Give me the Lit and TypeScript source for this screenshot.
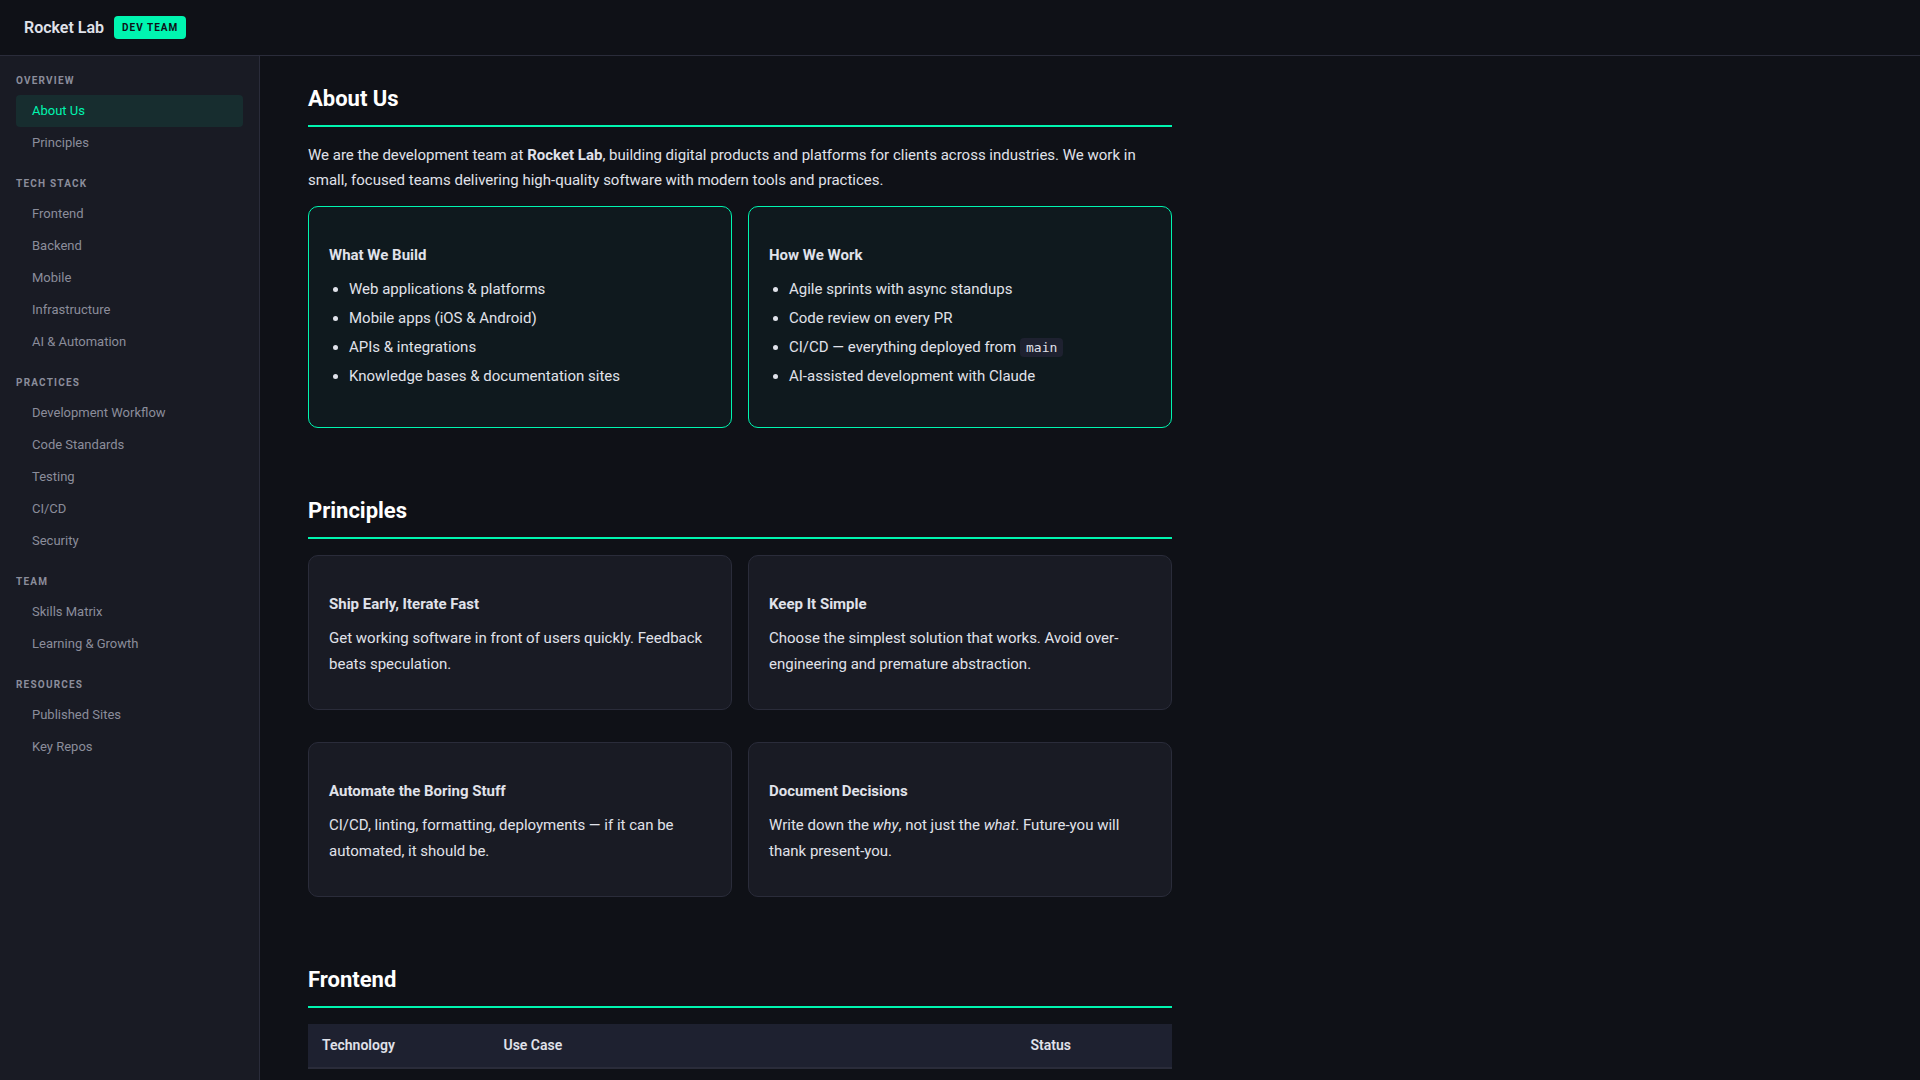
import { LitElement, html, css, type TemplateResult } from "lit";
import { customElement, state } from "lit/decorators.js";

interface NavGroup {
  title: string;
  items: string[];
}

interface Card {
  title: string;
  body: TemplateResult;
}

const NAV: NavGroup[] = [
  { title: "Overview", items: ["About Us", "Principles"] },
  {
    title: "Tech Stack",
    items: ["Frontend", "Backend", "Mobile", "Infrastructure", "AI & Automation"],
  },
  {
    title: "Practices",
    items: ["Development Workflow", "Code Standards", "Testing", "CI/CD", "Security"],
  },
  { title: "Team", items: ["Skills Matrix", "Learning & Growth"] },
  { title: "Resources", items: ["Published Sites", "Key Repos"] },
];

const ABOUT: Card[] = [
  {
    title: "What We Build",
    body: html`<ul class="list">
      <li>Web applications &amp; platforms</li>
      <li>Mobile apps (iOS &amp; Android)</li>
      <li>APIs &amp; integrations</li>
      <li>Knowledge bases &amp; documentation sites</li>
    </ul>`,
  },
  {
    title: "How We Work",
    body: html`<ul class="list">
      <li>Agile sprints with async standups</li>
      <li>Code review on every PR</li>
      <li>CI/CD — everything deployed from <code class="code">main</code></li>
      <li>AI-assisted development with Claude</li>
    </ul>`,
  },
];

const PRINCIPLES: Card[] = [
  {
    title: "Ship Early, Iterate Fast",
    body: html`<p class="text">
      Get working software in front of users quickly. Feedback beats speculation.
    </p>`,
  },
  {
    title: "Keep It Simple",
    body: html`<p class="text">
      Choose the simplest solution that works. Avoid over-engineering and premature abstraction.
    </p>`,
  },
  {
    title: "Automate the Boring Stuff",
    body: html`<p class="text">
      CI/CD, linting, formatting, deployments — if it can be automated, it should be.
    </p>`,
  },
  {
    title: "Document Decisions",
    body: html`<p class="text">
      Write down the <em>why</em>, not just the <em>what</em>. Future-you will thank present-you.
    </p>`,
  },
];

const slug = (name: string) => name.toLowerCase().replace(/[^a-z]+/g, "-");

@customElement("app-root")
export class AppRoot extends LitElement {
  static styles = css`
    :host {
      --bg: #0f1117;
      --surface: #191b24;
      --raised: #1e2130;
      --line: #2a2c3a;
      --text: #e0e2ea;
      --muted: #8b8d9b;
      --accent: #00f5b0;
      display: flex;
      flex-direction: column;
      min-height: 100vh;
      background: var(--bg);
      color: var(--text);
      font: 15px/25px Roboto, sans-serif;
    }
    * {
      box-sizing: border-box;
    }
    .topbar {
      display: flex;
      align-items: center;
      gap: 10px;
      padding: 16px 24px;
      border-bottom: 1px solid var(--line);
    }
    .brand {
      font-size: 16px;
      line-height: 23px;
      font-weight: 600;
    }
    .badge {
      padding: 3px 8px;
      border-radius: 4px;
      background: var(--accent);
      color: #0f1117;
      font-size: 10px;
      line-height: 17px;
      font-weight: 700;
      letter-spacing: 1px;
      text-transform: uppercase;
    }
    .layout {
      display: flex;
      flex: 1;
    }
    .sidebar {
      flex: none;
      display: flex;
      flex-direction: column;
      gap: 16px;
      width: 260px;
      padding: 16px;
      background: var(--surface);
      border-right: 1px solid var(--line);
    }
    .group-title {
      margin: 0 0 6px;
      color: var(--muted);
      font-size: 10px;
      line-height: 17px;
      font-weight: 700;
      letter-spacing: 0.12em;
      text-transform: uppercase;
    }
    .links {
      margin: 0;
      padding: 0;
      list-style: none;
    }
    .link {
      display: block;
      padding: 5px 16px;
      border-radius: 4px;
      color: var(--muted);
      font-size: 13px;
      line-height: 22px;
      text-decoration: none;
    }
    .link.active {
      background: #172d2f;
      color: var(--accent);
    }
    .main {
      flex: 1;
      display: flex;
      flex-direction: column;
      gap: 64px;
      max-width: 960px;
      padding: 24px 48px 0;
    }
    .heading {
      margin: 0 0 16px;
      padding-bottom: 8px;
      border-bottom: 2px solid var(--accent);
      color: #ffffff;
      font-size: 22px;
      line-height: 37px;
      font-weight: 700;
    }
    .text {
      margin: 0 0 12px;
      line-height: 26px;
    }
    .intro {
      margin: 0 0 13px;
    }
    .cards {
      display: grid;
      grid-template-columns: repeat(2, 1fr);
      gap: 32px 16px;
    }
    .card {
      padding: 36px 20px 20px;
      border: 1px solid var(--line);
      border-radius: 10px;
      background: var(--surface);
    }
    .card.highlight {
      border-color: var(--accent);
      background: #0f191e;
    }
    .card-title {
      margin: 0 0 8px;
      font-size: 15px;
      line-height: 25px;
      font-weight: 700;
    }
    .list {
      margin: 0 0 18px;
      padding-left: 20px;
      line-height: 26px;
    }
    .list li + li {
      margin-top: 3px;
    }
    .code {
      padding: 2px 6px;
      border-radius: 4px;
      background: var(--raised);
      font: 13px/15px "DejaVu Sans Mono", monospace;
    }
    .table {
      width: 100%;
      table-layout: fixed;
      border-collapse: separate;
      border-spacing: 0;
      font-size: 14px;
      line-height: 23px;
    }
    .table th {
      padding: 10px 14px;
      border-bottom: 2px solid var(--line);
      background: var(--raised);
      font-weight: 600;
      text-align: left;
    }
    .col-tech {
      width: 21%;
    }
    .col-use {
      width: 61%;
    }
    .col-status {
      width: 18%;
    }
  `;

  @state() private active = "About Us";

  private renderCards(cards: Card[], highlight = false) {
    return html`<div class="cards">
      ${cards.map(
        (card) => html`<article class="card ${highlight ? "highlight" : ""}">
          <h3 class="card-title">${card.title}</h3>
          ${card.body}
        </article>`
      )}
    </div>`;
  }

  private renderGroup(group: NavGroup) {
    return html`<div>
      <h2 class="group-title">${group.title}</h2>
      <ul class="links">
        ${group.items.map(
          (item) => html`<li>
            <a
              class="link ${item === this.active ? "active" : ""}"
              href="#${slug(item)}"
              @click=${() => (this.active = item)}
              >${item}</a
            >
          </li>`
        )}
      </ul>
    </div>`;
  }

  render() {
    return html`
      <header class="topbar">
        <span class="brand">Rocket Lab</span>
        <span class="badge">Dev Team</span>
      </header>
      <div class="layout">
        <nav class="sidebar">${NAV.map((group) => this.renderGroup(group))}</nav>
        <main class="main">
          <section id="about-us">
            <h2 class="heading">About Us</h2>
            <p class="intro">
              We are the development team at <strong>Rocket Lab</strong>, building digital products
              and platforms for clients across industries. We work in small, focused teams
              delivering high-quality software with modern tools and practices.
            </p>
            ${this.renderCards(ABOUT, true)}
          </section>
          <section id="principles">
            <h2 class="heading">Principles</h2>
            ${this.renderCards(PRINCIPLES)}
          </section>
          <section id="frontend">
            <h2 class="heading">Frontend</h2>
            <table class="table">
              <colgroup>
                <col class="col-tech" />
                <col class="col-use" />
                <col class="col-status" />
              </colgroup>
              <thead>
                <tr>
                  <th scope="col">Technology</th>
                  <th scope="col">Use Case</th>
                  <th scope="col">Status</th>
                </tr>
              </thead>
            </table>
          </section>
        </main>
      </div>
    `;
  }
}
